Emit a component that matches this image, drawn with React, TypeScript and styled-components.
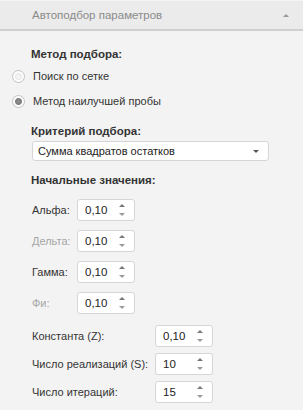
import React from "react";
import styled, { createGlobalStyle } from "styled-components";

const GlobalStyle = createGlobalStyle`
  html, body {
    margin: 0;
    padding: 0;
    background: #f3f3f3;
  }
  body {
    font-family: "Liberation Sans", Arial, sans-serif;
    font-size: 11px;
    color: #333;
  }
`;

const Panel = styled.div`
  width: 303px;
  height: 410px;
  background: #f3f3f3;
  overflow: hidden;
`;

const Header = styled.div`
  height: 28px;
  display: flex;
  align-items: center;
  justify-content: space-between;
  padding: 0 14px 0 32px;
  background: #ebebeb;
  border-top: 1px solid #f4f4f4;
  border-bottom: 2px solid #cfcfcf;
  color: #8a8a8a;
  font-size: 11.5px;
`;

const UpCaret = styled.span`
  width: 0;
  height: 0;
  border-left: 3px solid transparent;
  border-right: 3px solid transparent;
  border-bottom: 3px solid #999;
`;

const Body = styled.div`
  display: flex;
  flex-direction: column;
  padding: 15px 0 0 0;
`;

const Title = styled.div<{ $top?: number }>`
  font-weight: bold;
  font-size: 11.5px;
  color: #333;
  padding-left: 31px;
  margin-top: ${(p) => p.$top ?? 0}px;
  line-height: 16px;
`;

const RadioRow = styled.label<{ $top: number }>`
  display: flex;
  align-items: center;
  gap: 8px;
  padding-left: 12px;
  height: 16px;
  margin-top: ${(p) => p.$top}px;
  color: #333;
`;

const RadioDot = styled.span<{ $checked?: boolean }>`
  width: 11px;
  height: 11px;
  border-radius: 50%;
  border: 1px solid #c2c2c2;
  background: #fdfdfd;
  display: flex;
  align-items: center;
  justify-content: center;
  box-sizing: content-box;
  &::after {
    content: "";
    width: 7px;
    height: 7px;
    border-radius: 50%;
    background: ${(p) => (p.$checked ? "#8a8a8a" : "#f4f4f4")};
    border: 1px solid ${(p) => (p.$checked ? "#6e6e6e" : "#e4e4e4")};
    box-sizing: border-box;
  }
`;

const Select = styled.div`
  margin: 2px 0 0 32px;
  width: 237px;
  height: 20px;
  box-sizing: border-box;
  background: #fff;
  border: 1px solid #d6d6d6;
  border-radius: 3px;
  display: flex;
  align-items: center;
  justify-content: space-between;
  padding: 0 9px 0 5px;
  color: #222;
`;

const DownCaret = styled.span<{ $color?: string }>`
  width: 0;
  height: 0;
  border-left: 3px solid transparent;
  border-right: 3px solid transparent;
  border-top: 3px solid ${(p) => p.$color ?? "#555"};
`;

const SmallUp = styled.span<{ $color?: string }>`
  width: 0;
  height: 0;
  border-left: 3px solid transparent;
  border-right: 3px solid transparent;
  border-bottom: 3px solid ${(p) => p.$color ?? "#777"};
`;

const FieldList = styled.div<{ $gap: number; $top: number }>`
  display: flex;
  flex-direction: column;
  gap: ${(p) => p.$gap}px;
  margin-top: ${(p) => p.$top}px;
  padding-left: 32px;
`;

const Field = styled.div<{ $labelWidth: number }>`
  display: grid;
  grid-template-columns: ${(p) => p.$labelWidth}px 58px;
  align-items: center;
`;

const Label = styled.span<{ $disabled?: boolean }>`
  white-space: nowrap;
  color: ${(p) => (p.$disabled ? "#a6a6a6" : "#333")};
`;

const Spin = styled.div`
  height: 22px;
  box-sizing: border-box;
  background: #fff;
  border: 1px solid #d6d6d6;
  border-radius: 3px;
  display: flex;
  align-items: center;
  justify-content: space-between;
  padding: 0 9px 0 7px;
  color: #222;
  font-size: 11.5px;
`;

const Arrows = styled.div`
  display: flex;
  flex-direction: column;
  align-items: center;
  gap: 6px;
`;

type FieldData = { label: string; value: string; disabled?: boolean };

const initial: FieldData[] = [
  { label: "Альфа:", value: "0,10" },
  { label: "Дельта:", value: "0,10", disabled: true },
  { label: "Гамма:", value: "0,10" },
  { label: "Фи:", value: "0,10", disabled: true },
];

const extra: FieldData[] = [
  { label: "Константа (Z):", value: "0,10" },
  { label: "Число реализаций (S):", value: "10" },
  { label: "Число итераций:", value: "15" },
];

const SpinBox: React.FC<{ value: string }> = ({ value }) => (
  <Spin>
    <span>{value}</span>
    <Arrows>
      <SmallUp />
      <DownCaret $color="#9a9a9a" />
    </Arrows>
  </Spin>
);

export default function App() {
  return (
    <>
      <GlobalStyle />
      <Panel>
        <Header>
          <span>Автоподбор параметров</span>
          <UpCaret />
        </Header>
        <Body>
          <Title>Метод подбора:</Title>
          <RadioRow $top={6}>
            <RadioDot />
            Поиск по сетке
          </RadioRow>
          <RadioRow $top={9}>
            <RadioDot $checked />
            Метод наилучшей пробы
          </RadioRow>
          <Title $top={14}>Критерий подбора:</Title>
          <Select>
            <span>Сумма квадратов остатков</span>
            <DownCaret />
          </Select>
          <Title $top={11}>Начальные значения:</Title>
          <FieldList $gap={9} $top={11}>
            {initial.map((f) => (
              <Field key={f.label} $labelWidth={45}>
                <Label $disabled={f.disabled}>{f.label}</Label>
                <SpinBox value={f.value} />
              </Field>
            ))}
          </FieldList>
          <FieldList $gap={6} $top={11}>
            {extra.map((f) => (
              <Field key={f.label} $labelWidth={123}>
                <Label>{f.label}</Label>
                <SpinBox value={f.value} />
              </Field>
            ))}
          </FieldList>
        </Body>
      </Panel>
    </>
  );
}
